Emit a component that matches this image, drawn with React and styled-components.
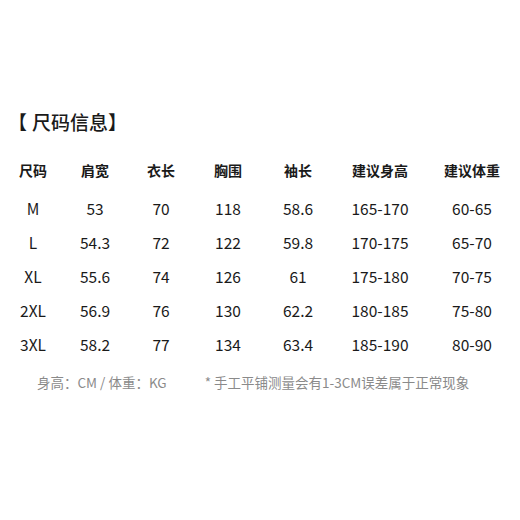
import React from "react";
import styled, { createGlobalStyle } from "styled-components";

const Global = createGlobalStyle`
  html, body { margin: 0; padding: 0; background: #ffffff; }
  body { font-family: "Noto Sans CJK SC", "Noto Sans", sans-serif; color: #1a1a1a; }
`;

const Page = styled.div`
  width: 520px;
  height: 520px;
  padding-top: 110px;
  box-sizing: border-box;
`;

const Title = styled.h2`
  margin: 0 0 19px 0;
  padding-left: 8px;
  font-size: 19px;
  line-height: 24px;
  font-weight: 500;
  color: #1a1a1a;
`;

const Bracket = styled.span`
  margin-right: ${(p) => (p.$open ? "5px" : "0")};
`;

const Table = styled.div`
  padding-left: 2px;
  display: grid;
  grid-template-columns: 62px 62px 70px 64px 76px 88px 96px;
`;

const Row = styled.div`
  display: contents;
`;

const Cell = styled.div`
  height: 34px;
  margin-bottom: ${(p) => (p.$head ? "4px" : "0")};
  display: flex;
  align-items: center;
  justify-content: center;
  font-size: ${(p) => (p.$head ? "14px" : "15.5px")};
  font-weight: ${(p) => (p.$head ? 700 : 400)};
  color: #1a1a1a;
  white-space: nowrap;
`;

const Footer = styled.div`
  margin-top: 11px;
  padding-left: 37px;
  display: flex;
  gap: 38px;
  font-size: 13.5px;
  line-height: 20px;
  color: #8a8a8a;
  white-space: nowrap;
`;

const head = ["尺码", "肩宽", "衣长", "胸围", "袖长", "建议身高", "建议体重"];
const rows = [
  ["M", "53", "70", "118", "58.6", "165-170", "60-65"],
  ["L", "54.3", "72", "122", "59.8", "170-175", "65-70"],
  ["XL", "55.6", "74", "126", "61", "175-180", "70-75"],
  ["2XL", "56.9", "76", "130", "62.2", "180-185", "75-80"],
  ["3XL", "58.2", "77", "134", "63.4", "185-190", "80-90"],
];

export default function App() {
  return (
    <>
      <Global />
      <Page>
        <Title>
          <Bracket $open>【</Bracket>尺码信息<Bracket>】</Bracket>
        </Title>
        <Table>
          <Row>
            {head.map((h) => (
              <Cell $head key={h}>{h}</Cell>
            ))}
          </Row>
          {rows.map((r) => (
            <Row key={r[0]}>
              {r.map((c, i) => (
                <Cell key={i}>{c}</Cell>
              ))}
            </Row>
          ))}
        </Table>
        <Footer>
          <span>身高：CM / 体重：KG</span>
          <span>* 手工平铺测量会有1-3CM误差属于正常现象</span>
        </Footer>
      </Page>
    </>
  );
}
